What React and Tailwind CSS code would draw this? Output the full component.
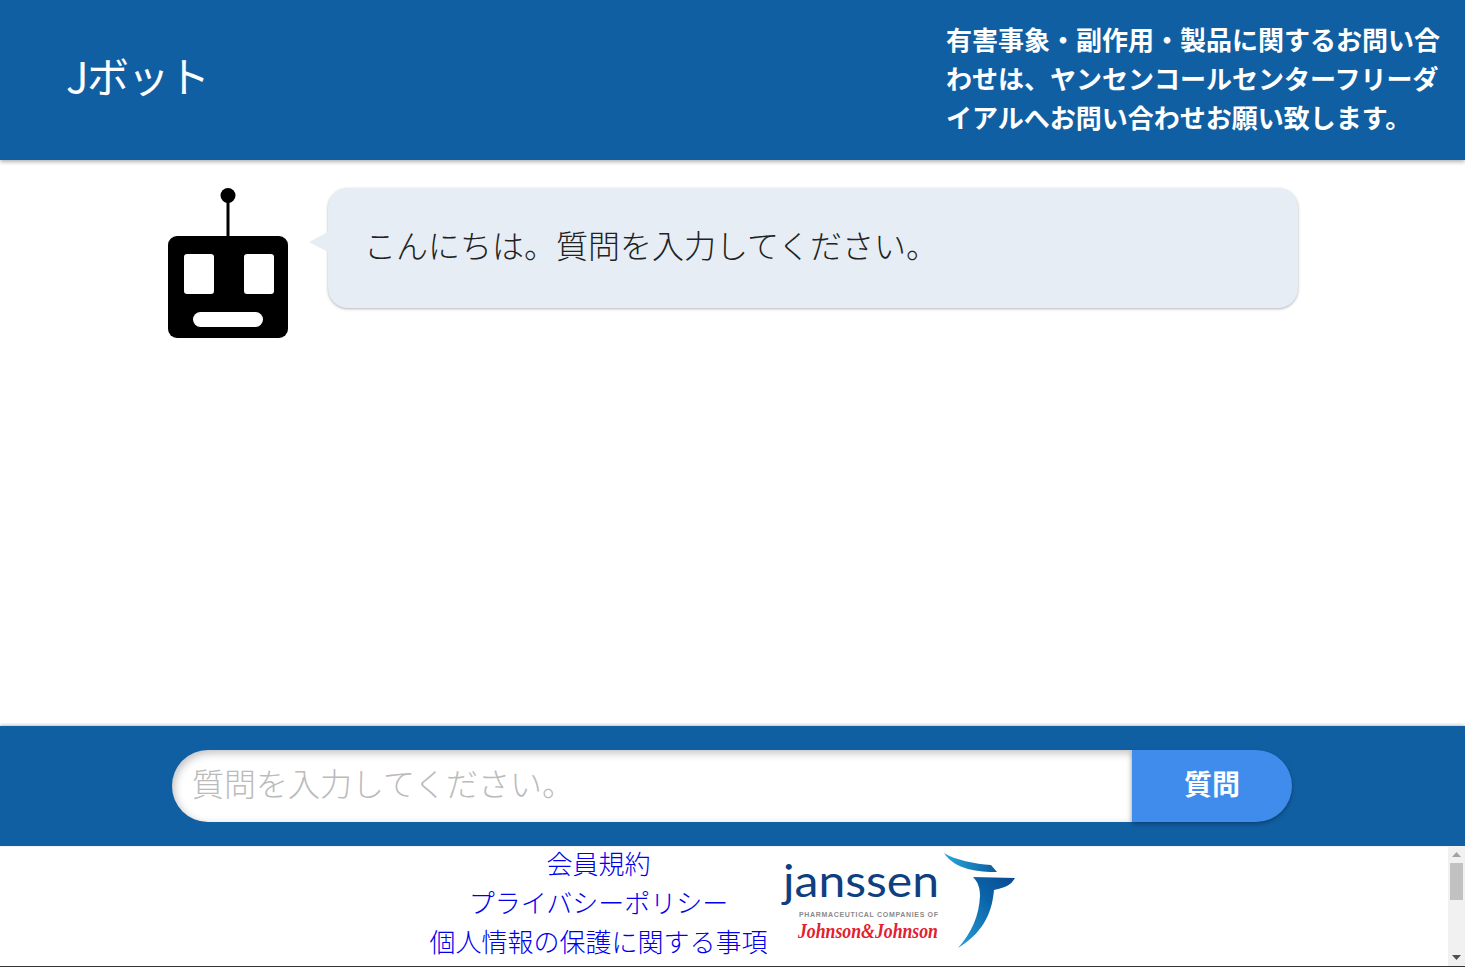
const FONT = "font-['Meiryo','Noto_Sans_CJK_JP','Noto_Sans',sans-serif]";

const RobotIcon = () => (
    <svg width="120" height="150" viewBox="0 0 120 150" className="shrink-0 block">
        <circle cx="60" cy="7.5" r="7.5" fill="#000" />
        <rect x="58.5" y="7" width="3" height="43" fill="#000" />
        <rect x="0" y="48" width="120" height="102" rx="9" fill="#000" />
        <rect x="16" y="66" width="30" height="40" rx="3" fill="#fff" />
        <rect x="76" y="66" width="30" height="40" rx="3" fill="#fff" />
        <rect x="25" y="124" width="70" height="15" rx="7.5" fill="#fff" />
    </svg>
);

const JanssenLogo = () => (
    <svg width="240" height="100" viewBox="0 0 240 100" className="shrink-0 block">
        <defs>
            <linearGradient id="topSwoosh" x1="0" y1="0" x2="1" y2="0">
                <stop offset="0" stopColor="#2aa7dc" />
                <stop offset="1" stopColor="#0b5c9f" />
            </linearGradient>
            <linearGradient id="stem" x1="0" y1="1" x2="1" y2="0">
                <stop offset="0" stopColor="#2aa0da" />
                <stop offset="0.6" stopColor="#0a63a8" />
                <stop offset="1" stopColor="#0a4a90" />
            </linearGradient>
        </defs>
        <text x="4" y="47" fontFamily="Lato, sans-serif" fontWeight="400" fontSize="45" fill="#0f3f80" textLength="156" lengthAdjust="spacingAndGlyphs">janssen</text>
        <text x="20" y="67" fontFamily="'Liberation Sans', sans-serif" fontWeight="700" fontSize="7" fill="#8a8a8a" textLength="139" lengthAdjust="spacing">PHARMACEUTICAL COMPANIES OF</text>
        <text x="19" y="88" fontFamily="'Liberation Serif', serif" fontStyle="italic" fontWeight="700" fontSize="20" fill="#e2202f" textLength="140" lengthAdjust="spacingAndGlyphs">Johnson&amp;Johnson</text>
        <path d="M165 3 C176 10 196 14 212 15 L218 22 C200 22 176 20 165 3 Z" fill="url(#topSwoosh)" />
        <path d="M194 27 L236 28 C233 33 230 37 215 40 C213 65 202 84 179 98 C193 82 200 66 201 46 C201 38 199 32 194 27 Z" fill="url(#stem)" />
    </svg>
);

const Scrollbar = () => (
    <div className="w-[17px] shrink-0 bg-[#f1f1f1] flex flex-col items-center">
        <svg width="9" height="5" viewBox="0 0 9 5" className="mt-[6px] block">
            <path d="M4.5 0 L9 5 L0 5 Z" fill="#a3a3a3" />
        </svg>
        <div className="w-[13px] h-[37px] mt-[6px] bg-[#c1c1c1]" />
        <div className="flex-1" />
        <svg width="9" height="5" viewBox="0 0 9 5" className="mb-[6px] block">
            <path d="M0 0 L9 0 L4.5 5 Z" fill="#505050" />
        </svg>
    </div>
);

const App = () => {
    return (
        <div className={`${FONT} h-[967px] w-full overflow-hidden flex flex-col bg-white`}>
            <header className="relative z-10 h-40 shrink-0 bg-[#115fa3] shadow-[0_2px_4px_rgba(0,0,0,0.3)] flex items-center justify-between pl-[66px] pr-[20px] pb-[5px]">
                <h1 className="text-[42px] font-normal text-white leading-none tracking-[-1.5px] mb-[5px]">Jボット</h1>
                <p className="w-[499px] text-[26px] leading-[39px] font-bold text-white">
                    有害事象・副作用・製品に関するお問い合わせは、ヤンセンコールセンターフリーダイアルへお問い合わせお願い致します。
                </p>
            </header>

            <main className="flex-1 min-h-0 flex items-start pt-7 pl-[168px]">
                <RobotIcon />
                <div className="relative ml-10 w-[970px] h-[120px] rounded-[20px] bg-[#e6edf5] shadow-[0_1px_3px_rgba(0,0,0,0.3)] pl-[36px] pt-[34px]">
                    <span className="absolute left-[-19px] top-[44px] w-0 h-0 border-y-[10px] border-y-transparent border-r-[19px] border-r-[#e6edf5]" />
                    <p className="text-[32px] leading-[44px] font-light text-[#222]">こんにちは。質問を入力してください。</p>
                </div>
            </main>

            <form className="h-[120px] shrink-0 bg-[#115fa3] shadow-[0_-1px_3px_rgba(0,0,0,0.25)] flex items-center pl-[172px]" onSubmit={(e) => e.preventDefault()}>
                <input
                    className="w-[960px] h-[72px] rounded-l-[36px] bg-white pl-5 pb-2 text-[32px] font-light text-[#222] placeholder:text-[#bbbbbb] outline-none shadow-[inset_2px_3px_9px_rgba(0,0,0,0.25)]"
                    placeholder="質問を入力してください。"
                    type="text"
                />
                <button className="w-40 h-[72px] rounded-r-[36px] bg-[#3f8cec] text-white text-[28px] font-bold pb-[6px] shadow-[0_2px_4px_rgba(0,0,0,0.3)]" type="submit">
                    質問
                </button>
            </form>

            <footer className="h-[121px] shrink-0 flex flex-col">
                <div className="flex-1 min-h-0 flex">
                    <div className="flex-1 flex justify-center items-start">
                        <div className="flex flex-col items-center -mt-[3px] text-[26px] leading-[39px] font-light text-[#0000ee]">
                            <a href="#">会員規約</a>
                            <a href="#">プライバシーポリシー</a>
                            <a href="#">個人情報の保護に関する事項</a>
                        </div>
                        <div className="ml-[11px] mt-[4px]">
                            <JanssenLogo />
                        </div>
                    </div>
                    <Scrollbar />
                </div>
                <div className="h-px bg-[#333]" />
            </footer>
        </div>
    );
};

export default App;
